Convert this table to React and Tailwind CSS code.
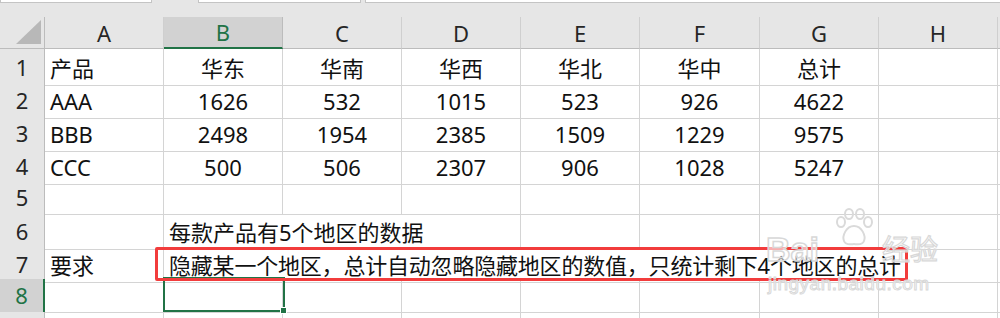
import React from 'react'

const cols = ['A', 'B', 'C', 'D', 'E', 'F', 'G', 'H']

const data = [
  ['产品', '华东', '华南', '华西', '华北', '华中', '总计'],
  ['AAA', '1626', '532', '1015', '523', '926', '4622'],
  ['BBB', '2498', '1954', '2385', '1509', '1229', '9575'],
  ['CCC', '500', '506', '2307', '906', '1028', '5247'],
]

const heights = ['h-[32px]', 'h-[33px]', 'h-[33px]', 'h-[33px]', 'h-[33px]', 'h-[32px]', 'h-[33px]', 'h-[33px]', 'h-[33px]']

const gridCols = 'grid grid-cols-[45px_119px_119px_119px_119px_119px_120px_119px_119px_1fr]'

function RowHead({ n, selected }) {
  return (
    <div
      className={
        'flex items-center justify-center border-b border-[#d4d4d4] ' +
        (selected
          ? 'bg-[#d2d2d2] text-[#217346] border-r-2 border-r-[#217346]'
          : 'bg-[#e6e6e6] text-[#262626] border-r border-r-[#bcbcbc]')
      }
    >
      {n}
    </div>
  )
}

function Cell({ children, left, span }) {
  return (
    <div
      className={
        'flex items-center pt-[3px] whitespace-nowrap border-r border-b border-[#d4d4d4] ' +
        (left ? 'justify-start pl-[5px] ' : 'justify-center ') +
        (span || '')
      }
    >
      {children}
    </div>
  )
}

export default function App() {
  return (
    <div className="relative w-[1000px] h-[318px] overflow-hidden bg-white text-[22px] text-[#111] font-['Noto_Sans','Noto_Sans_CJK_SC',sans-serif]">
      {/* formula bar bottom edge */}
      <div className="flex items-start h-[17px] bg-[#e6e6e6]">
        <div className="w-[152px] h-[3px] bg-white border border-t-0 border-[#c4c4c4]" />
        <div className="w-[46px]" />
        <div className="w-[163px] h-[3px] bg-white border border-t-0 border-[#c4c4c4]" />
        <div className="w-[4px]" />
        <div className="flex-1 h-[3px] bg-white border border-t-0 border-r-0 border-[#c4c4c4]" />
      </div>

      {/* column headers */}
      <div className={gridCols + ' h-[32px] bg-[#e6e6e6] leading-none'}>
        <div className="flex items-end justify-end pr-[3px] pb-[4px] border-r border-b border-[#bcbcbc]">
          <svg width="25" height="24" viewBox="0 0 25 24">
            <polygon points="25,0 25,24 0,24" fill="#b8b8b8" />
          </svg>
        </div>
        {cols.map((c) =>
          c === 'B' ? (
            <div key={c} className="flex items-center justify-center bg-[#d2d2d2] text-[#217346] border-r border-r-[#bcbcbc] border-b-2 border-b-[#217346]">
              {c}
            </div>
          ) : (
            <div key={c} className="flex items-center justify-center text-[#262626] border-r border-r-[#cfcfcf] border-b border-b-[#bcbcbc]">
              {c}
            </div>
          )
        )}
        <div className="border-b border-[#bcbcbc]" />
      </div>

      {/* data rows 1-4 */}
      {data.map((row, i) => (
        <div key={i} className={gridCols + ' ' + heights[i + 1]}>
          <RowHead n={i + 1} />
          {row.map((v, j) => (
            <Cell key={j} left={j === 0}>
              {v}
            </Cell>
          ))}
          <Cell />
          <div className="border-b border-[#d4d4d4]" />
        </div>
      ))}

      {/* row 5 */}
      <div className={gridCols + ' ' + heights[5]}>
        <RowHead n={5} />
        {cols.map((c) => (
          <Cell key={c} />
        ))}
        <div className="border-b border-[#d4d4d4]" />
      </div>

      {/* row 6 */}
      <div className={gridCols + ' ' + heights[6]}>
        <RowHead n={6} />
        <Cell />
        <Cell left span="col-span-3">每款产品有5个地区的数据</Cell>
        {['E', 'F', 'G', 'H'].map((c) => (
          <Cell key={c} />
        ))}
        <div className="border-b border-[#d4d4d4]" />
      </div>

      {/* row 7 */}
      <div className={gridCols + ' ' + heights[7]}>
        <RowHead n={7} />
        <Cell left>要求</Cell>
        <Cell left span="col-span-7 tracking-[-0.2px]">隐藏某一个地区，总计自动忽略隐藏地区的数值，只统计剩下4个地区的总计</Cell>
        <div className="border-b border-[#d4d4d4]" />
      </div>

      {/* row 8 */}
      <div className={gridCols + ' ' + heights[8]}>
        <RowHead n={8} selected />
        {cols.map((c) => (
          <Cell key={c} />
        ))}
        <div className="border-b border-[#d4d4d4]" />
      </div>

      {/* row 9, only its top edge is in view */}
      <div className={gridCols + ' h-[33px]'}>
        <div className="bg-[#e6e6e6] border-r border-[#bcbcbc]" />
        {cols.map((c) => (
          <div key={c} className="border-r border-[#d4d4d4]" />
        ))}
        <div />
      </div>

      {/* active cell B8 */}
      <div className="absolute left-[163px] top-[277px] w-[122px] h-[35px] border-2 border-[#217346]" />
      <div className="absolute left-[280px] top-[307px] w-[7px] h-[7px] bg-[#217346] border border-white" />

      {/* red annotation box */}
      <div className="absolute left-[155px] top-[247px] w-[753px] h-[34px] border-[3px] border-[#f23c3c] rounded-[2px]" />

      {/* baidu jingyan watermark */}
      <div className="absolute left-[766px] top-[206px] w-[180px] h-[90px] pointer-events-none">
        <svg className="absolute left-[66px] top-[2px]" width="44" height="40" viewBox="0 0 44 40" fill="none" stroke="#dadada" strokeWidth="2">
          <ellipse cx="9" cy="14" rx="4" ry="5" />
          <ellipse cx="17" cy="6" rx="4" ry="5" />
          <ellipse cx="28" cy="6" rx="4" ry="5" />
          <ellipse cx="36" cy="14" rx="4" ry="5" />
          <path d="M22 18 C14 18 10 28 12 33 C14 38 20 36 22 36 C24 36 30 38 32 33 C34 28 30 18 22 18 Z" />
        </svg>
        <div className="absolute left-[0px] top-[26px] text-[34px] leading-none font-bold font-['Liberation_Sans',sans-serif] text-white/60 [-webkit-text-stroke:1.5px_#d8d8d8]">
          Bai
        </div>
        <div className="absolute left-[116px] top-[28px] text-[28px] leading-none font-['Noto_Sans_CJK_SC',sans-serif] text-white/60 [-webkit-text-stroke:1.2px_#d8d8d8]">
          经验
        </div>
        <div className="absolute left-[2px] top-[68px] text-[19px] leading-none tracking-[0.5px] font-['Liberation_Sans',sans-serif] text-white/60 [-webkit-text-stroke:1px_#d8d8d8]">
          jingyan.baidu.com
        </div>
      </div>
    </div>
  )
}
